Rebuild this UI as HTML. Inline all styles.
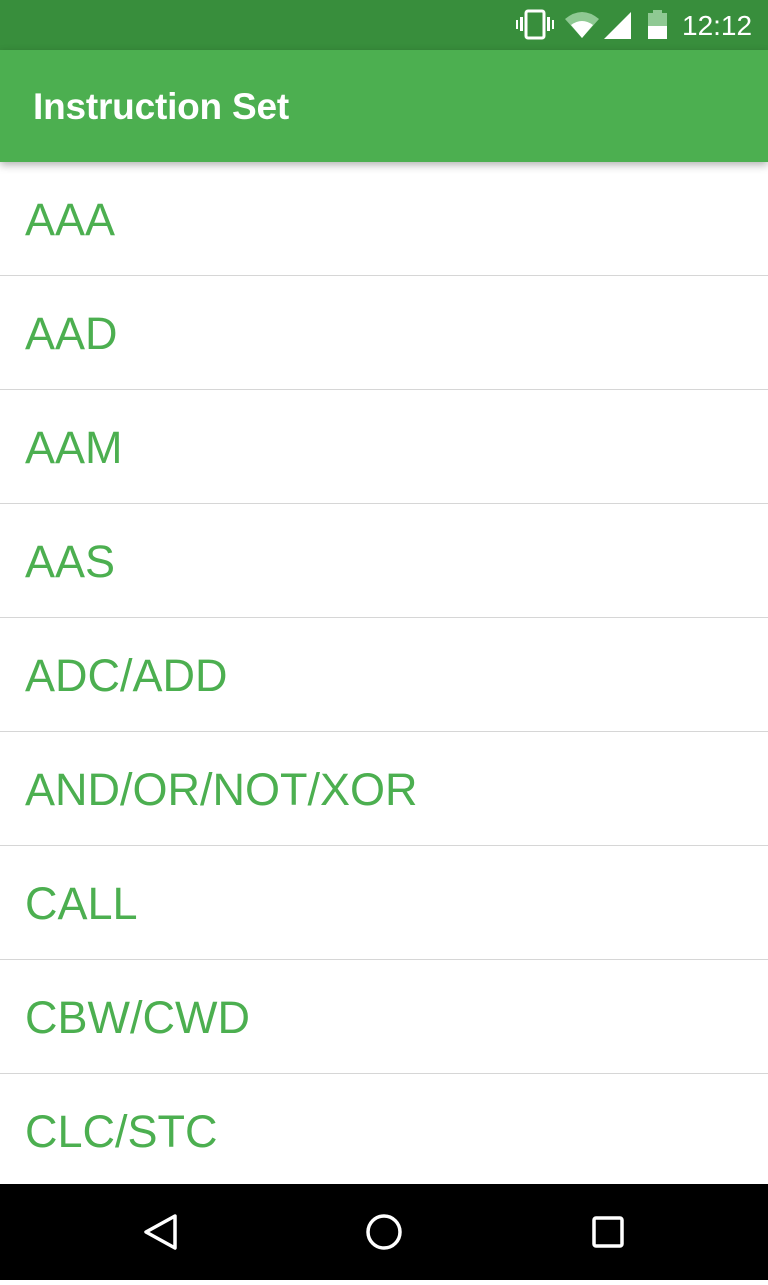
<!DOCTYPE html>
<html><head><style>
body{margin:0;width:768px;height:1280px;overflow:hidden;background:#fff;font-family:"Liberation Sans",sans-serif;position:relative}
.sb{position:absolute;top:0;left:0;width:768px;height:50px;background:#388E3C}
.ab{position:absolute;top:50px;left:0;width:768px;height:112px;background:#4CAF50;box-shadow:0 3px 8px rgba(0,0,0,.3);z-index:2}
.ab span{position:absolute;left:33px;top:36px;font-size:37px;font-weight:bold;color:#fff;letter-spacing:-0.2px}
.list{position:absolute;top:162px;left:0;width:768px}
.row{height:113px;border-bottom:1px solid #d6d6d6;position:relative}
.row span{position:absolute;left:25px;top:32px;font-size:45px;color:#4CAF50}
.nav{position:absolute;top:1184px;left:0;width:768px;height:96px;background:#000}
</style></head><body>
<div class="sb">
<svg width="768" height="50" style="position:absolute;left:0;top:0">
<g fill="#fff">
<rect x="526" y="11" width="18" height="27" rx="2" fill="none" stroke="#fff" stroke-width="3"/>
<rect x="520" y="17" width="3" height="14"/><rect x="516" y="20" width="2" height="9"/>
<rect x="547" y="17" width="3" height="14"/><rect x="552" y="20" width="2" height="9"/>
<path d="M565 19 Q582 5 599 19 L582 38 Z" fill="#8fc993"/>
<path d="M571 25 Q582 17 593 25 L582 38 Z"/>
<path d="M604 39 L631 12 L631 39 Z"/>
<rect x="648" y="13" width="19" height="26" fill="#8fc993"/><rect x="653" y="10" width="9" height="4" fill="#8fc993"/>
<rect x="648" y="26" width="19" height="13"/>
</g>
<text x="682" y="35" font-family="Liberation Sans" font-size="28" fill="#fff">12:12</text>
</svg>
</div>
<div class="ab"><span>Instruction Set</span></div>
<div class="list">
<div class="row"><span>AAA</span></div>
<div class="row"><span>AAD</span></div>
<div class="row"><span>AAM</span></div>
<div class="row"><span>AAS</span></div>
<div class="row"><span>ADC/ADD</span></div>
<div class="row"><span>AND/OR/NOT/XOR</span></div>
<div class="row"><span>CALL</span></div>
<div class="row"><span>CBW/CWD</span></div>
<div class="row"><span>CLC/STC</span></div>
</div>
<div class="nav">
<svg width="768" height="96">
<path d="M175 32 L146 48 L175 64 Z" fill="none" stroke="#fff" stroke-width="3.5" stroke-linejoin="round"/>
<circle cx="384" cy="48" r="16" fill="none" stroke="#fff" stroke-width="3.5"/>
<rect x="594" y="34" width="28" height="28" rx="2" fill="none" stroke="#fff" stroke-width="3.5"/>
</svg>
</div>
</body></html>
